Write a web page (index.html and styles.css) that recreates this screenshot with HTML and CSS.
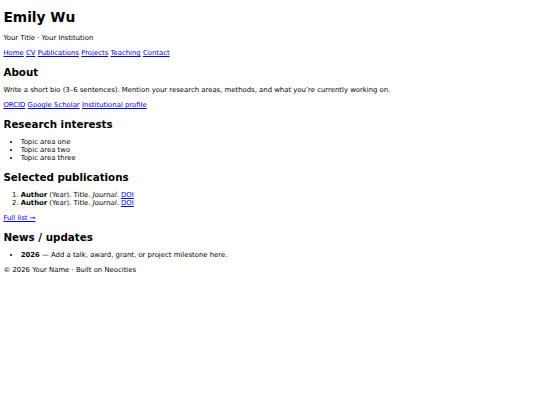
FILE: index.html
```html
<!DOCTYPE html>
<html lang="en">
<head>
<meta charset="utf-8">
<title>Emily Wu</title>
<link rel="stylesheet" href="styles.css">
</head>
<body>
<header>
<h1>Emily Wu</h1>
<p>Your Title · Your Institution</p>
<nav><a href="#">Home</a> <a href="#">CV</a> <a href="#">Publications</a> <a href="#">Projects</a> <a href="#">Teaching</a> <a href="#">Contact</a></nav>
</header>
<main>
<section>
<h2>About</h2>
<p>Write a short bio (3–6 sentences). Mention your research areas, methods, and what you’re currently working on.</p>
<p><a href="#">ORCID</a> <a href="#">Google Scholar</a> <a href="#">Institutional profile</a></p>
</section>
<section>
<h2>Research interests</h2>
<ul>
<li>Topic area one</li>
<li>Topic area two</li>
<li>Topic area three</li>
</ul>
</section>
<section>
<h2>Selected publications</h2>
<ol>
<li><strong>Author</strong> (Year). Title. <em>Journal</em>. <a href="#">DOI</a></li>
<li><strong>Author</strong> (Year). Title. <em>Journal</em>. <a href="#">DOI</a></li>
</ol>
<p><a href="#">Full list →</a></p>
</section>
<section>
<h2>News / updates</h2>
<ul>
<li><strong>2026</strong> — Add a talk, award, grant, or project milestone here.</li>
</ul>
</section>
</main>
<footer><p>© 2026 Your Name · Built on Neocities</p></footer>
</body>
</html>
```
FILE: styles.css
```css
body {
  margin: 3.44px;
  font-family: "DejaVu Sans", sans-serif;
  font-size: 6.88px;
  color: #000;
  background: #fff;
}
h1 { font-size: 2em; margin: 5.6px 0 0.67em; }
h2 { font-size: 1.5em; margin: 0.83em 0; }
p { margin: 1em 0; }
ul, ol { margin: 1em 0; padding-left: 17.2px; }
a { color: #00e; }
```
